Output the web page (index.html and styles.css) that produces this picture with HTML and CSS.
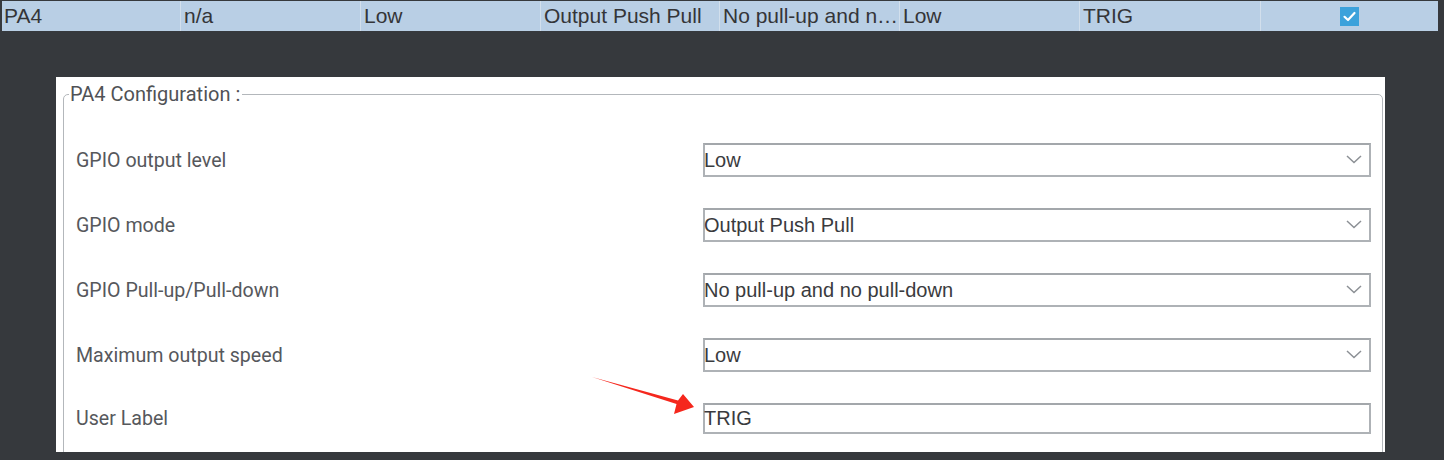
FILE: index.html
```html
<!DOCTYPE html>
<html lang="en">
<head>
<meta charset="utf-8">
<title>PA4 Configuration</title>
<link rel="stylesheet" href="styles.css">
</head>
<body>
<div class="pin-row">
  <div class="cell">PA4</div>
  <div class="cell">n/a</div>
  <div class="cell">Low</div>
  <div class="cell">Output Push Pull</div>
  <div class="cell">No pull-up and no pull-down</div>
  <div class="cell">Low</div>
  <div class="cell">TRIG</div>
  <div class="cell cell-check">
    <span class="checkbox">
      <svg viewBox="0 0 19 19" width="19" height="19"><path d="M4.5 9.8 L8 13 L14.5 6" fill="none" stroke="#fff" stroke-width="2.2" stroke-linecap="round" stroke-linejoin="round"/></svg>
    </span>
  </div>
</div>

<div class="panel">
  <fieldset class="config">
    <legend class="legend">PA4 Configuration :</legend>
    <div class="form">
      <div class="label">GPIO output level</div>
      <div class="select"><span class="value">Low</span><svg class="chev" viewBox="0 0 16 9" width="16" height="9"><path d="M1 1 L8 7.5 L15 1" fill="none" stroke="#8c9095" stroke-width="1.5"/></svg></div>

      <div class="label">GPIO mode</div>
      <div class="select"><span class="value">Output Push Pull</span><svg class="chev" viewBox="0 0 16 9" width="16" height="9"><path d="M1 1 L8 7.5 L15 1" fill="none" stroke="#8c9095" stroke-width="1.5"/></svg></div>

      <div class="label">GPIO Pull-up/Pull-down</div>
      <div class="select"><span class="value">No pull-up and no pull-down</span><svg class="chev" viewBox="0 0 16 9" width="16" height="9"><path d="M1 1 L8 7.5 L15 1" fill="none" stroke="#8c9095" stroke-width="1.5"/></svg></div>

      <div class="label">Maximum output speed</div>
      <div class="select"><span class="value">Low</span><svg class="chev" viewBox="0 0 16 9" width="16" height="9"><path d="M1 1 L8 7.5 L15 1" fill="none" stroke="#8c9095" stroke-width="1.5"/></svg></div>

      <div class="label">User Label</div>
      <div class="input"><span class="value">TRIG</span></div>
    </div>
  </fieldset>
</div>

<svg class="arrow" viewBox="0 0 115 50" width="115" height="50">
  <polygon points="7,7 93,30.5 98,24 109,37 89,44 91.5,34" fill="#f5271d"/>
</svg>
</body>
</html>
```

FILE: styles.css
```css
html, body {
  margin: 0;
  padding: 0;
}

body {
  background: #36393d;
  width: 1444px;
  height: 460px;
  overflow: hidden;
  position: relative;
}

.pin-row {
  margin: 1px 0 0 2px;
  width: 1436px;
  height: 30px;
  background: #b9cfe5;
  display: grid;
  grid-template-columns: 178px 180px 180px 179px 180px 180px 181px 178px;
  font-family: "Liberation Sans", Arial, sans-serif;
  font-size: 21px;
  line-height: 30px;
  color: #343538;
}

.cell {
  padding-left: 3px;
  white-space: nowrap;
  overflow: hidden;
  text-overflow: ellipsis;
  border-left: 1px solid #d2dfec;
}

.cell:first-child {
  border-left: none;
  padding-left: 2px;
}

.cell-check {
  display: flex;
  align-items: center;
  justify-content: center;
  padding-left: 0;
}

.checkbox {
  width: 19px;
  height: 19px;
  background: #3ca2db;
  display: block;
}

.checkbox svg {
  display: block;
}

.panel {
  margin: 46px 0 0 56px;
  width: 1329px;
  height: 375px;
  background: #ffffff;
  box-sizing: border-box;
  padding: 6px 2px 0 7px;
  overflow: hidden;
}

.config {
  margin: 0;
  border: 1px solid #b3b7bb;
  border-radius: 5px;
  padding: 38px 11px 40px 12px;
  min-height: 420px;
}

.legend {
  font-family: Roboto, "Liberation Sans", sans-serif;
  font-size: 20px;
  line-height: 22px;
  color: #505256;
  padding: 0 2px 0 1px;
  margin-left: -7px;
}

.form {
  display: grid;
  grid-template-columns: 627px 1fr;
  grid-template-rows: 34px 34px 34px 34px 31px;
  row-gap: 31px;
  align-items: center;
}

.label {
  font-family: Roboto, "Liberation Sans", sans-serif;
  font-size: 19.6px;
  color: #56585c;
}

.select, .input {
  box-sizing: border-box;
  height: 34px;
  border: 2px solid #aeb2b6;
  border-top-color: #a3a7ab;
  display: flex;
  align-items: center;
  justify-content: space-between;
  padding: 0 7px 0 0;
  font-family: "Liberation Sans", Arial, sans-serif;
  font-size: 20px;
  color: #3a3b3e;
}

.value {
  margin-left: -1px;
}

.input {
  height: 31px;
}

.chev {
  display: block;
  margin-top: -2px;
}

.arrow {
  position: absolute;
  left: 585px;
  top: 370px;
}
```
